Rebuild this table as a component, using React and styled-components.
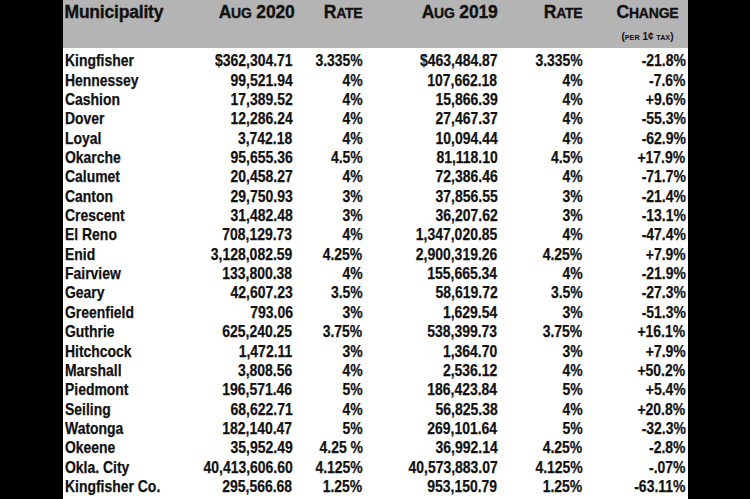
import React from "react";
import styled, { createGlobalStyle } from "styled-components";

const GlobalStyle = createGlobalStyle`
  html, body {
    margin: 0;
    padding: 0;
    background: #000;
  }
  body {
    width: 750px;
    height: 499px;
    overflow: hidden;
  }
`;

const Page = styled.div`
  display: flex;
  justify-content: center;
  height: 499px;
  background: #000;
`;

const Sheet = styled.div`
  width: 625px;
  height: 499px;
  background: #fff;
  color: #111;
  font-family: "Liberation Sans", Arial, sans-serif;
`;

const cols = "125px 103px 70px 135px 85px 103px";

const Header = styled.div`
  display: grid;
  grid-template-columns: ${cols};
  align-items: start;
  height: 48px;
  box-sizing: border-box;
  padding: 2px 2px 0 2px;
  background: #b4b4b4;
  font-weight: 700;
  font-size: 17.5px;
  line-height: 20px;
  letter-spacing: -0.2px;
  -webkit-text-stroke: 0.35px #111;
`;

const HeadCell = styled.div`
  text-align: ${(p) => (p.$left ? "left" : "right")};
  margin-right: ${(p) => p.$shift || 0}px;
  white-space: nowrap;
`;

const Sc = styled.span`
  font-size: 0.8em;
  text-transform: uppercase;
`;

const ChangeHead = styled.div`
  display: flex;
  justify-content: flex-end;
  padding-right: 7px;
`;

const ChangeStack = styled.div`
  display: inline-flex;
  flex-direction: column;
  align-items: center;
  white-space: nowrap;
`;

const Note = styled.span`
  margin-top: 9px;
  font-size: 10px;
  line-height: 10px;
  letter-spacing: 0;
  -webkit-text-stroke: 0;
  font-weight: 700;
`;

const NoteSc = styled.span`
  font-size: 0.72em;
  text-transform: uppercase;
`;

const Body = styled.div`
  padding: 3px 2px 0 2px;
`;

const Row = styled.div`
  display: grid;
  grid-template-columns: ${cols};
  height: 19.36px;
  align-items: center;
  font-size: 17px;
  font-weight: 700;
  line-height: 19px;
  -webkit-text-stroke: 0.25px #111;
`;

const Cell = styled.div`
  display: flex;
  justify-content: ${(p) => (p.$left ? "flex-start" : "flex-end")};
  white-space: nowrap;
`;

const Narrow = styled.span`
  display: inline-block;
  transform: scaleX(0.82);
  transform-origin: ${(p) => (p.$left ? "left" : "right")} center;
`;

const rows = [
  ["Kingfisher", "$362,304.71", "3.335%", "$463,484.87", "3.335%", "-21.8%"],
  ["Hennessey", "99,521.94", "4%", "107,662.18", "4%", "-7.6%"],
  ["Cashion", "17,389.52", "4%", "15,866.39", "4%", "+9.6%"],
  ["Dover", "12,286.24", "4%", "27,467.37", "4%", "-55.3%"],
  ["Loyal", "3,742.18", "4%", "10,094.44", "4%", "-62.9%"],
  ["Okarche", "95,655.36", "4.5%", "81,118.10", "4.5%", "+17.9%"],
  ["Calumet", "20,458.27", "4%", "72,386.46", "4%", "-71.7%"],
  ["Canton", "29,750.93", "3%", "37,856.55", "3%", "-21.4%"],
  ["Crescent", "31,482.48", "3%", "36,207.62", "3%", "-13.1%"],
  ["El Reno", "708,129.73", "4%", "1,347,020.85", "4%", "-47.4%"],
  ["Enid", "3,128,082.59", "4.25%", "2,900,319.26", "4.25%", "+7.9%"],
  ["Fairview", "133,800.38", "4%", "155,665.34", "4%", "-21.9%"],
  ["Geary", "42,607.23", "3.5%", "58,619.72", "3.5%", "-27.3%"],
  ["Greenfield", "793.06", "3%", "1,629.54", "3%", "-51.3%"],
  ["Guthrie", "625,240.25", "3.75%", "538,399.73", "3.75%", "+16.1%"],
  ["Hitchcock", "1,472.11", "3%", "1,364.70", "3%", "+7.9%"],
  ["Marshall", "3,808.56", "4%", "2,536.12", "4%", "+50.2%"],
  ["Piedmont", "196,571.46", "5%", "186,423.84", "5%", "+5.4%"],
  ["Seiling", "68,622.71", "4%", "56,825.38", "4%", "+20.8%"],
  ["Watonga", "182,140.47", "5%", "269,101.64", "5%", "-32.3%"],
  ["Okeene", "35,952.49", "4.25 %", "36,992.14", "4.25%", "-2.8%"],
  ["Okla. City", "40,413,606.60", "4.125%", "40,573,883.07", "4.125%", "-.07%"],
  ["Kingfisher Co.", "295,566.68", "1.25%", "953,150.79", "1.25%", "-63.11%"],
];

export default function App() {
  return (
    <>
      <GlobalStyle />
      <Page>
        <Sheet>
          <Header>
            <HeadCell $left>Municipality</HeadCell>
            <HeadCell $shift={-2}>
              A<Sc>ug</Sc> 2020
            </HeadCell>
            <HeadCell>
              R<Sc>ate</Sc>
            </HeadCell>
            <HeadCell>
              A<Sc>ug</Sc> 2019
            </HeadCell>
            <HeadCell>
              R<Sc>ate</Sc>
            </HeadCell>
            <ChangeHead>
              <ChangeStack>
                <span>
                  C<Sc>hange</Sc>
                </span>
                <Note>
                  (<NoteSc>per</NoteSc> 1¢ <NoteSc>tax</NoteSc>)
                </Note>
              </ChangeStack>
            </ChangeHead>
          </Header>
          <Body>
            {rows.map((r) => (
              <Row key={r[0]}>
                {r.map((v, i) => (
                  <Cell key={i} $left={i === 0}>
                    <Narrow $left={i === 0}>{v}</Narrow>
                  </Cell>
                ))}
              </Row>
            ))}
          </Body>
        </Sheet>
      </Page>
    </>
  );
}
